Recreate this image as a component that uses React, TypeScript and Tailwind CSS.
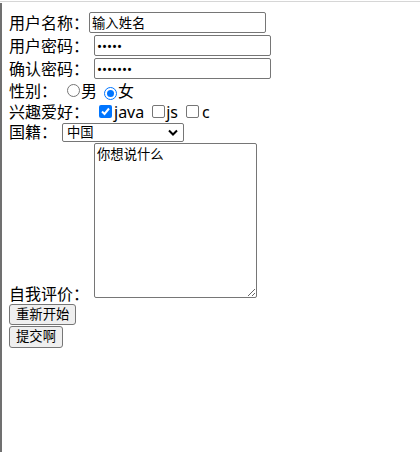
import React from 'react';

// 简单的注册表单，照着浏览器默认控件的样子画
const font = { fontFamily: '"Noto Sans", "Noto Sans CJK SC", sans-serif' };

const Radio: React.FC<{ checked?: boolean }> = ({ checked }) =>
  checked ? (
    <span className="inline-flex w-[13px] h-[13px] rounded-full border border-[#0075ff] items-center justify-center bg-white">
      <span className="w-[7px] h-[7px] rounded-full bg-[#0075ff]" />
    </span>
  ) : (
    <span className="inline-block w-[13px] h-[13px] rounded-full border border-[#767676] bg-white" />
  );

const Checkbox: React.FC<{ checked?: boolean }> = ({ checked }) =>
  checked ? (
    <span className="inline-flex w-[13px] h-[13px] rounded-[2px] bg-[#0075ff] items-center justify-center">
      <svg width="11" height="11" viewBox="0 0 11 11">
        <polyline points="2,5.5 4.5,8 9,2.5" fill="none" stroke="white" strokeWidth="2" />
      </svg>
    </span>
  ) : (
    <span className="inline-block w-[13px] h-[13px] rounded-[2px] border border-[#767676] bg-white" />
  );

const App: React.FC = () => {
  return (
    <div className="w-[420px] h-[452px] bg-white flex flex-col text-black" style={font}>
      <div className="h-px bg-white" />
      <div className="h-px bg-[#d6d6d6]" />
      <div className="flex-1 mt-px border-l-2 border-[#707070] pl-[7px] pt-[8px] text-[16px]">
        <div className="flex items-center h-[23px]">
          <span className="w-[80px] leading-[20px]">用户名称：</span>
          <input
            className="w-[177px] h-[21px] border border-[#767676] rounded-[2px] px-[2px] text-[13.33px] outline-none"
            defaultValue="输入姓名"
          />
        </div>
        <div className="flex items-center h-[23px]">
          <span className="w-[85px] leading-[20px]">用户密码：</span>
          <input
            type="password"
            className="w-[177px] h-[21px] border border-[#767676] rounded-[2px] px-[2px] text-[13.33px] outline-none"
            defaultValue="12345"
          />
        </div>
        <div className="flex items-center h-[23px]">
          <span className="w-[85px] leading-[20px]">确认密码：</span>
          <input
            type="password"
            className="w-[177px] h-[21px] border border-[#767676] rounded-[2px] px-[2px] text-[13.33px] outline-none"
            defaultValue="1234567"
          />
        </div>
        <div className="flex items-center h-[21px]">
          <span className="w-[58px] leading-[20px]">性别：</span>
          <Radio />
          <span className="ml-[1px] leading-[20px]">男</span>
          <span className="ml-[7px]">
            <Radio checked />
          </span>
          <span className="ml-[1px] leading-[20px]">女</span>
        </div>
        <div className="flex items-center h-[21px]">
          <span className="w-[90px] leading-[20px]">兴趣爱好：</span>
          <Checkbox checked />
          <span className="ml-[2px] leading-[20px]">java</span>
          <span className="ml-[8px] flex">
            <Checkbox />
          </span>
          <span className="ml-[1px] leading-[20px]">js</span>
          <span className="ml-[8px] flex">
            <Checkbox />
          </span>
          <span className="ml-[3px] leading-[20px]">c</span>
        </div>
        <div className="flex items-start h-[21px]">
          <span className="w-[53px] leading-[20px]">国籍：</span>
          <div className="mt-[1px] w-[122px] h-[19px] border border-[#767676] rounded-[2px] flex items-center justify-between pl-[4px] pr-[5px] text-[13.33px] leading-none">
            <span>中国</span>
            <svg width="10" height="7" viewBox="0 0 10 7">
              <polyline points="1,1.5 5,5.5 9,1.5" fill="none" stroke="black" strokeWidth="2" />
            </svg>
          </div>
        </div>
        <div className="flex items-end">
          <span className="w-[85px] leading-[20px]">自我评价：</span>
          <textarea
            className="w-[163px] h-[155px] mb-[6px] border border-[#767676] rounded-[2px] px-[2px] py-[2px] text-[13.33px] leading-[16px] outline-none resize"
            style={{ fontFamily: '"Noto Sans CJK SC", monospace' }}
            defaultValue="你想说什么"
          />
        </div>
        <div className="flex">
          <button className="h-[21px] px-[6px] bg-[#efefef] border border-[#767676] rounded-[3px] text-[13.33px] leading-none">
            重新开始
          </button>
        </div>
        <div className="flex mt-[1px]">
          <button className="h-[22px] px-[6px] bg-[#efefef] border border-[#767676] rounded-[3px] text-[13.33px] leading-none">
            提交啊
          </button>
        </div>
      </div>
    </div>
  );
};

export default App;
